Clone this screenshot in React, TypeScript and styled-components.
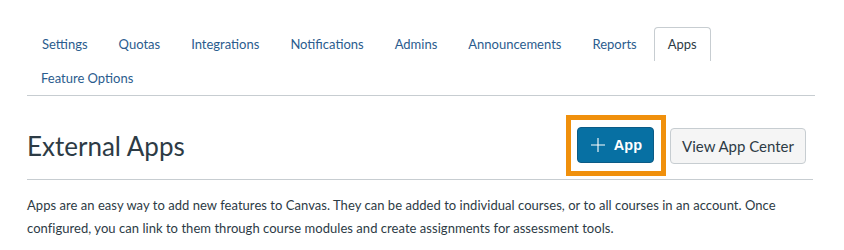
import React from 'react';
import styled, { createGlobalStyle } from 'styled-components';

const GlobalStyle = createGlobalStyle`
	body {
		margin: 0;
		background: #fff;
		font-family: Lato, "Open Sans", sans-serif;
		color: #2d3b45;
	}
`;

const Page = styled.div`
	width: 788px;
	padding: 27px 0 0 27px;
`;

// 탭 목록
const TabList = styled.ul`
	display: flex;
	flex-wrap: wrap;
	margin: 0;
	padding: 0;
	list-style: none;
	border-bottom: 1px solid #c7cdd1;
`;

const Tab = styled.li<{ $active?: boolean }>`
	box-sizing: border-box;
	height: 34px;
	padding: 0 13px 1px;
	margin-right: 3px;
	display: flex;
	align-items: center;
	font-size: 13px;
	color: ${(p) => (p.$active ? '#2d3b45' : '#2b5c8e')};
	border: 1px solid ${(p) => (p.$active ? '#c7cdd1' : 'transparent')};
	border-bottom: none;
	border-radius: 4px 4px 0 0;
	cursor: pointer;

	&:first-child {
		margin-left: 1px;
	}
`;

const Header = styled.div`
	display: flex;
	align-items: center;
	justify-content: space-between;
	height: 84px;
	padding-top: 17px;
	box-sizing: border-box;
	border-bottom: 1px solid #c7cdd1;
	margin-right: 2px;
`;

const Title = styled.h1`
	margin: 0;
	font-size: 26px;
	font-weight: 400;
	color: #2d3b45;
`;

const Actions = styled.div`
	display: flex;
	align-items: center;
	gap: 4px;
	margin-right: 7px;
`;

// 포커스 표시 테두리
const FocusRing = styled.span`
	display: flex;
	padding: 7px 7px 8px 6px;
	margin-top: -2px;
	border: 5px solid #f0900c;
`;

const Button = styled.button<{ $primary?: boolean }>`
	box-sizing: border-box;
	height: 36px;
	padding: ${(p) => (p.$primary ? '0 11px 0 13px' : '0 11px')};
	display: flex;
	align-items: center;
	gap: 9px;
	font-family: ${(p) => (p.$primary ? '"Liberation Sans", Arial' : 'Lato')}, sans-serif;
	font-size: ${(p) => (p.$primary ? '14.5px' : '15px')};
	border-radius: 4px;
	cursor: pointer;
	background: ${(p) => (p.$primary ? '#0770a3' : '#f5f5f5')};
	color: ${(p) => (p.$primary ? '#fff' : '#2d3b45')};
	border: 1px solid ${(p) => (p.$primary ? '#0b5b86' : '#c7cdd1')};
	font-weight: ${(p) => (p.$primary ? 700 : 400)};
`;

const Description = styled.p`
	margin: 14px 0 0;
	font-size: 13px;
	line-height: 23px;
	letter-spacing: 0.04px;
	color: #2d3b45;
	width: 800px;
`;

const tabs = ['Settings', 'Quotas', 'Integrations', 'Notifications', 'Admins', 'Announcements', 'Reports', 'Apps', 'Feature Options'];

const App = () => {
	return (
		<>
			<GlobalStyle />
			<Page>
				<TabList>
					{tabs.map((t) => (
						<Tab key={t} $active={t === 'Apps'}>
							{t}
						</Tab>
					))}
				</TabList>
				<Header>
					<Title>External Apps</Title>
					<Actions>
						<FocusRing>
							<Button $primary>
								<svg width="14" height="14" viewBox="0 0 14 14">
									<path d="M7 0v14M0 7h14" stroke="#fff" strokeWidth="1.1" fill="none" />
								</svg>
								App
							</Button>
						</FocusRing>
						<Button>View App Center</Button>
					</Actions>
				</Header>
				<Description>
					Apps are an easy way to add new features to Canvas. They can be added to individual courses, or to all courses in an account. Once configured, you can link to them through course modules and create assignments for assessment tools.
				</Description>
			</Page>
		</>
	);
};

export default App;
